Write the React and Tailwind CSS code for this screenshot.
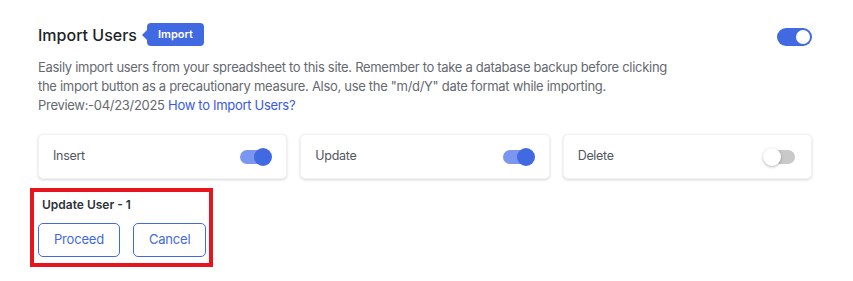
import { useState } from 'react'

function Switch({ on }) {
  return (
    <div className="relative w-[34px] h-[20px] shrink-0">
      <div
        className={
          'absolute left-[2px] right-[2px] top-[3px] h-[14px] rounded-full ' +
          (on ? 'bg-[#7b96ee]' : 'bg-[#c9c9c9]')
        }
      />
      <div
        className={
          'absolute top-[1px] size-[18px] rounded-full ' +
          (on ? 'right-0 bg-[#4169e1]' : 'left-0 bg-white shadow-[0_1px_3px_rgba(0,0,0,0.3)]')
        }
      />
    </div>
  )
}

function OptionCard({ label, on }) {
  return (
    <div className="h-[45px] flex items-center justify-between pl-[14px] pr-[14px] bg-white rounded-[5px] shadow-[0_1px_3px_rgba(0,0,0,0.16)] border border-[#f1f2f4]">
      <span className="text-[12.5px] tracking-[-0.3px] text-[#50575e]">{label}</span>
      <Switch on={on} />
    </div>
  )
}

export default function App() {
  const [enabled] = useState(true)

  return (
    <div className="w-[853px] h-[281px] bg-white pl-[38px] pr-[41px] pt-[23px] font-['Inter','Liberation_Sans',sans-serif]">
      {/* Header */}
      <div className="flex items-center justify-between h-[23px]">
        <div className="flex items-center">
          <h2 className="text-[16px] leading-[24px] font-medium text-[#1d2327]">Import Users</h2>
          <span className="ml-[5px] flex items-center">
            <span className="w-0 h-0 border-y-[5px] border-y-transparent border-r-[5px] border-r-[#4169e1]" />
            <span className="bg-[#4169e1] text-white text-[11px] leading-[23px] font-semibold px-[11px] rounded-[4px]">
              Import
            </span>
          </span>
        </div>
        <div
          className={
            'w-[35px] h-[18px] rounded-full flex items-center px-[2px] mt-[4px] ' +
            (enabled ? 'bg-[#4169e1] justify-end' : 'bg-[#c9c9c9] justify-start')
          }
        >
          <div className="size-[14px] rounded-full bg-white" />
        </div>
      </div>

      {/* Description */}
      <p className="mt-[12px] w-[640px] text-[13px] tracking-[-0.3px] leading-[19px] text-[#646970]">
        Easily import users from your spreadsheet to this site. Remember to take a database backup before clicking
        the import button as a precautionary measure. Also, use the "m/d/Y" date format while importing.
        <br />
        Preview:-04/23/2025 <a className="text-[#3858e9]">How to Import Users?</a>
      </p>

      {/* Options */}
      <div className="grid grid-cols-3 gap-[13px] mt-[19px]">
        <OptionCard label="Insert" on />
        <OptionCard label="Update" on />
        <OptionCard label="Delete" on={false} />
      </div>

      {/* Confirm */}
      <div className="mt-[9px] -ml-[8px] w-[183px] border-4 border-[#e8141d] pl-[4px] pr-[3px] pt-[4px] pb-[6px]">
        <div className="pl-[4px] text-[12px] leading-[18px] font-semibold text-[#2c3338]">Update User - 1</div>
        <div className="flex gap-[13px] mt-[9px]">
          <button className="h-[34px] px-[15px] rounded-[5px] border border-[#4169e1] text-[13px] tracking-[-0.2px] text-[#4169e1] bg-white">
            Proceed
          </button>
          <button className="h-[34px] px-[15px] rounded-[5px] border border-[#4169e1] text-[13px] tracking-[-0.2px] text-[#4169e1] bg-white">
            Cancel
          </button>
        </div>
      </div>
    </div>
  )
}
